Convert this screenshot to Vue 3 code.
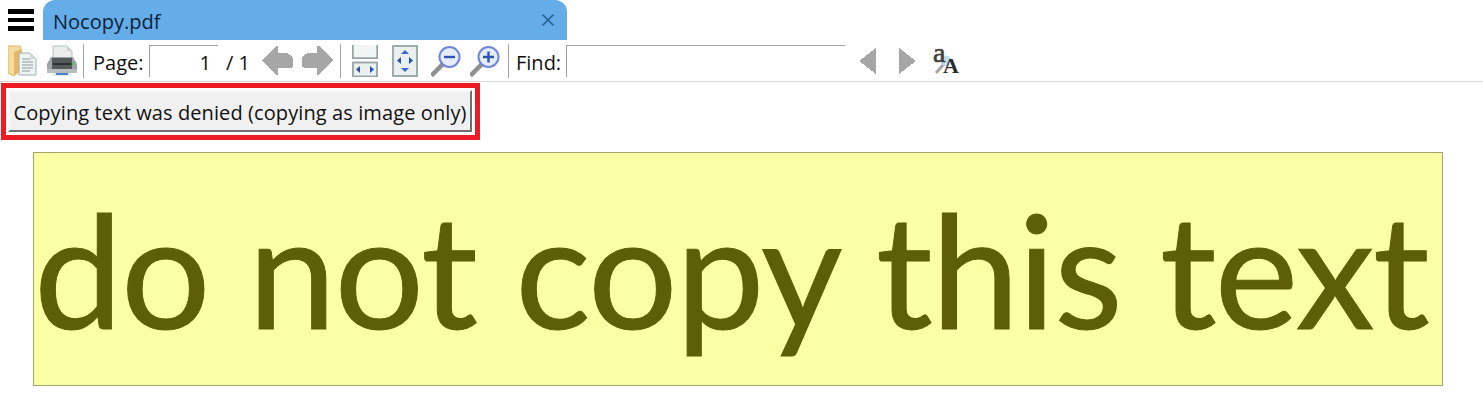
<template>
  <div class="app">
    <div class="tabbar">
      <div class="burger"><i></i><i></i><i></i></div>
      <div class="tab">
        <span class="tab-title">Nocopy.pdf</span>
        <svg class="tab-close" width="14" height="14" viewBox="0 0 14 14">
          <path d="M1.5 1.5l11 11M12.5 1.5l-11 11" stroke="#27618f" stroke-width="1.7" fill="none" />
        </svg>
      </div>
    </div>

    <div class="toolbar">
      <svg class="ic-open" width="29" height="32" viewBox="0 0 29 32">
        <path d="M0 1h12l1 2v22l-7 6-6-3z" fill="#f6dc9c" stroke="#dcb56a" />
        <path d="M6 7l8-3v21l-8 6z" fill="#e8b765" />
        <path d="M11 8h11l6 6v16H11z" fill="#eef3f2" stroke="#9fb2ae" />
        <path d="M22 8v6h6z" fill="#cfdcda" />
        <path d="M14 14h8M14 17h11M14 20h11M14 23h11M14 26h8" stroke="#a9bcb8" stroke-width="1.4" />
      </svg>
      <svg class="ic-print" width="32" height="32" viewBox="0 0 32 32">
        <path d="M7 1h14l5 5v9H7z" fill="#e9eeed" stroke="#b8c2c0" />
        <path d="M21 1v5h5z" fill="#c9d4d2" />
        <path d="M5 12h22l4 7v9H1v-9z" fill="#9da3a3" />
        <rect x="6" y="13" width="20" height="11" fill="#555a5b" />
        <rect x="7" y="18" width="18" height="2" fill="#2f3233" />
        <rect x="26" y="18" width="2" height="2" fill="#3ecf5a" />
        <rect x="1" y="24" width="30" height="4" fill="#b7bdbd" />
        <path d="M7 28h18v3H7z" fill="#dfe7e8" />
        <rect x="10" y="28" width="12" height="2" fill="#4c7fc7" />
      </svg>
      <span class="sep"></span>
      <span class="label page-label">Page:</span>
      <div class="field page-field">1</div>
      <span class="label page-total">/ 1</span>

      <svg class="ic-back" width="31" height="31" viewBox="0 0 31 31" shape-rendering="crispEdges">
        <path d="M0 15L14 1h2v7h9l5 3 1 3v8l-3 1H16v7h-2z" fill="#a6a6a6" />
      </svg>
      <svg class="ic-fwd" width="31" height="31" viewBox="0 0 31 31" shape-rendering="crispEdges">
        <path d="M31 15L17 1h-2v7H6l-5 3-1 3v8l3 1h12v7h2z" fill="#a6a6a6" />
      </svg>
      <span class="sep sep-view"></span>

      <svg class="ic-fitw" width="26" height="32" viewBox="0 0 26 32">
        <rect x="0.5" y="0" width="25" height="13" fill="#f1f6f5" />
        <path d="M0.8 0v13.2h24.4V0" fill="none" stroke="#93a5a3" stroke-width="1.800" />
        <rect x="1" y="17.500" width="24" height="14" fill="#e9f0ef" stroke="#93a5a3" stroke-width="1.800" />
        <path d="M8 21v7l-4-3.500zM18 21v7l4-3.500z" fill="#2450c0" />
      </svg>
      <svg class="ic-fitp" width="26" height="32" viewBox="0 0 26 32">
        <rect x="1" y="1" width="24" height="30" fill="#e9f0ef" stroke="#93a5a3" stroke-width="1.800" />
        <path d="M13 5l4 4H9zM13 27l-4-4h8z" fill="#3a66d0" />
        <path d="M9 12v7l-4-3.500zM17 12v7l4-3.500z" fill="#2450c0" />
      </svg>

      <svg class="ic-zoomout" width="30" height="32" viewBox="0 0 30 32">
        <path d="M2 29l9-9" stroke="#8f8f8f" stroke-width="4.500" stroke-linecap="square" />
        <circle cx="18.500" cy="12" r="10" fill="#e6edf8" stroke="#6f86dc" stroke-width="2" />
        <path d="M13 12h11" stroke="#2a55b5" stroke-width="2.400" />
      </svg>
      <svg class="ic-zoomin" width="30" height="32" viewBox="0 0 30 32">
        <path d="M2 29l9-9" stroke="#8f8f8f" stroke-width="4.500" stroke-linecap="square" />
        <circle cx="18.500" cy="12" r="10" fill="#e6edf8" stroke="#6f86dc" stroke-width="2" />
        <path d="M13 12h11M18.500 6.500v11" stroke="#2a55b5" stroke-width="2.400" />
      </svg>
      <span class="sep sep-find"></span>
      <span class="label find-label">Find:</span>
      <div class="field find-field"></div>

      <svg class="ic-prev" width="17" height="26" viewBox="0 0 17 26" shape-rendering="crispEdges">
        <path d="M17 0v26L0 13z" fill="#a6a6a6" />
      </svg>
      <svg class="ic-next" width="17" height="26" viewBox="0 0 17 26" shape-rendering="crispEdges">
        <path d="M0 0v26l17-13z" fill="#a6a6a6" />
      </svg>
      <svg class="ic-case" width="28" height="27" viewBox="0 0 28 27">
        <circle cx="13" cy="14" r="5.500" fill="#c6dcee" />
        <path d="M3 26l7-8" stroke="#a8a8a8" stroke-width="3" />
        <text x="0" y="15" class="case-a">a</text>
        <text x="10" y="26" class="case-b">A</text>
      </svg>
    </div>

    <div class="notice-mark">
      <button class="notice">Copying text was denied (copying as image only)</button>
    </div>

    <div class="page">
      <div class="page-text">do not copy this text</div>
    </div>
  </div>
</template>

<script setup>
</script>

<style>
html,
body {
  background: #fff;
}
</style>

<style scoped>
.app {
  width: 1483px;
  height: 413px;
  overflow: hidden;
  background: #fff;
  font-family: "Open Sans", "Noto Sans", sans-serif;
  color: #111;
}

.tabbar {
  display: flex;
  height: 40px;
}

.burger {
  width: 26px;
  margin: 9px 9px 0 8px;
  display: flex;
  flex-direction: column;
  gap: 4px;
}

.burger i {
  display: block;
  height: 4.500px;
  background: #000;
}

.tab {
  width: 524px;
  display: flex;
  align-items: center;
  justify-content: space-between;
  padding: 0 12px 0 10px;
  box-sizing: border-box;
  background: #65ade9;
  border-radius: 12px 12px 0 0;
}

.tab-title {
  font-size: 20px;
  padding-top: 2px;
  color: #0c2238;
}

.toolbar {
  height: 41px;
  display: flex;
  align-items: center;
  padding-left: 8px;
  border-bottom: 1px solid #d9d9d9;
}

.toolbar svg {
  flex: none;
  display: block;
}

.toolbar .ic-case {
  overflow: visible;
}

.sep {
  width: 1px;
  height: 34px;
  background: #a0a0a0;
  flex: none;
}

.label {
  font-size: 20px;
  padding-top: 3px;
  white-space: nowrap;
}

.field {
  height: 32px;
  box-sizing: border-box;
  border-top: 1px solid #a0a0a0;
  border-left: 1px solid #a0a0a0;
  font-size: 20px;
  line-height: 34px;
  text-align: right;
  flex: none;
}

.case-a {
  font-family: "Liberation Serif", serif;
  font-size: 28px;
  fill: #3f3f3f;
  stroke: #3f3f3f;
  stroke-width: 0.7px;
}

.case-b {
  font-family: "Liberation Serif", serif;
  font-size: 22px;
  font-weight: 700;
  fill: #2b2b2b;
}

.ic-print { margin-left: 9px; }
.sep { margin-left: 5px; }
.page-label { margin-left: 9px; width: 56px; flex: none; }
.page-field { width: 69px; padding-right: 7px; }
.page-total { margin-left: 8px; width: 36px; flex: none; }
.ic-fwd { margin-left: 9px; }
.sep-view { margin-left: 7px; }
.ic-fitw { margin-left: 11px; }
.ic-fitp { margin-left: 14px; }
.ic-zoomout { margin-left: 13px; }
.ic-zoomin { margin-left: 9px; }
.sep-find { margin-left: 8px; }
.find-label { margin-left: 7px; width: 50px; flex: none; }
.find-field { width: 279px; }
.ic-prev { margin-left: 14px; }
.ic-next { margin-left: 23px; }
.ic-case { margin-left: 17px; }

.notice-mark {
  width: 479px;
  height: 57px;
  box-sizing: border-box;
  margin: 1px 0 0 1px;
  padding: 2px 3px 3px 2px;
  border: 5px solid #ed1c24;
}

.notice {
  display: block;
  width: 100%;
  height: 100%;
  padding: 2px 0 0;
  font-family: inherit;
  font-size: 20px;
  letter-spacing: 0.1px;
  color: #111;
  background: #f0f0f0;
  border: 2px solid;
  border-color: #f8f8f8 #6e6e6e #6e6e6e #f8f8f8;
  white-space: nowrap;
}

.page {
  width: 1410px;
  height: 234px;
  box-sizing: border-box;
  margin: 12px 0 0 33px;
  padding: 0 14px 3px 0;
  display: flex;
  align-items: center;
  justify-content: center;
  background: #fbffa6;
  border: 1px solid #a3a36e;
}

.page-text {
  font-family: Lato, "Open Sans", sans-serif;
  font-size: 158px;
  letter-spacing: -1.5px;
  line-height: 1;
  color: #5c5f05;
  white-space: nowrap;
  -webkit-text-stroke: 1px #5c5f05;
}
</style>
